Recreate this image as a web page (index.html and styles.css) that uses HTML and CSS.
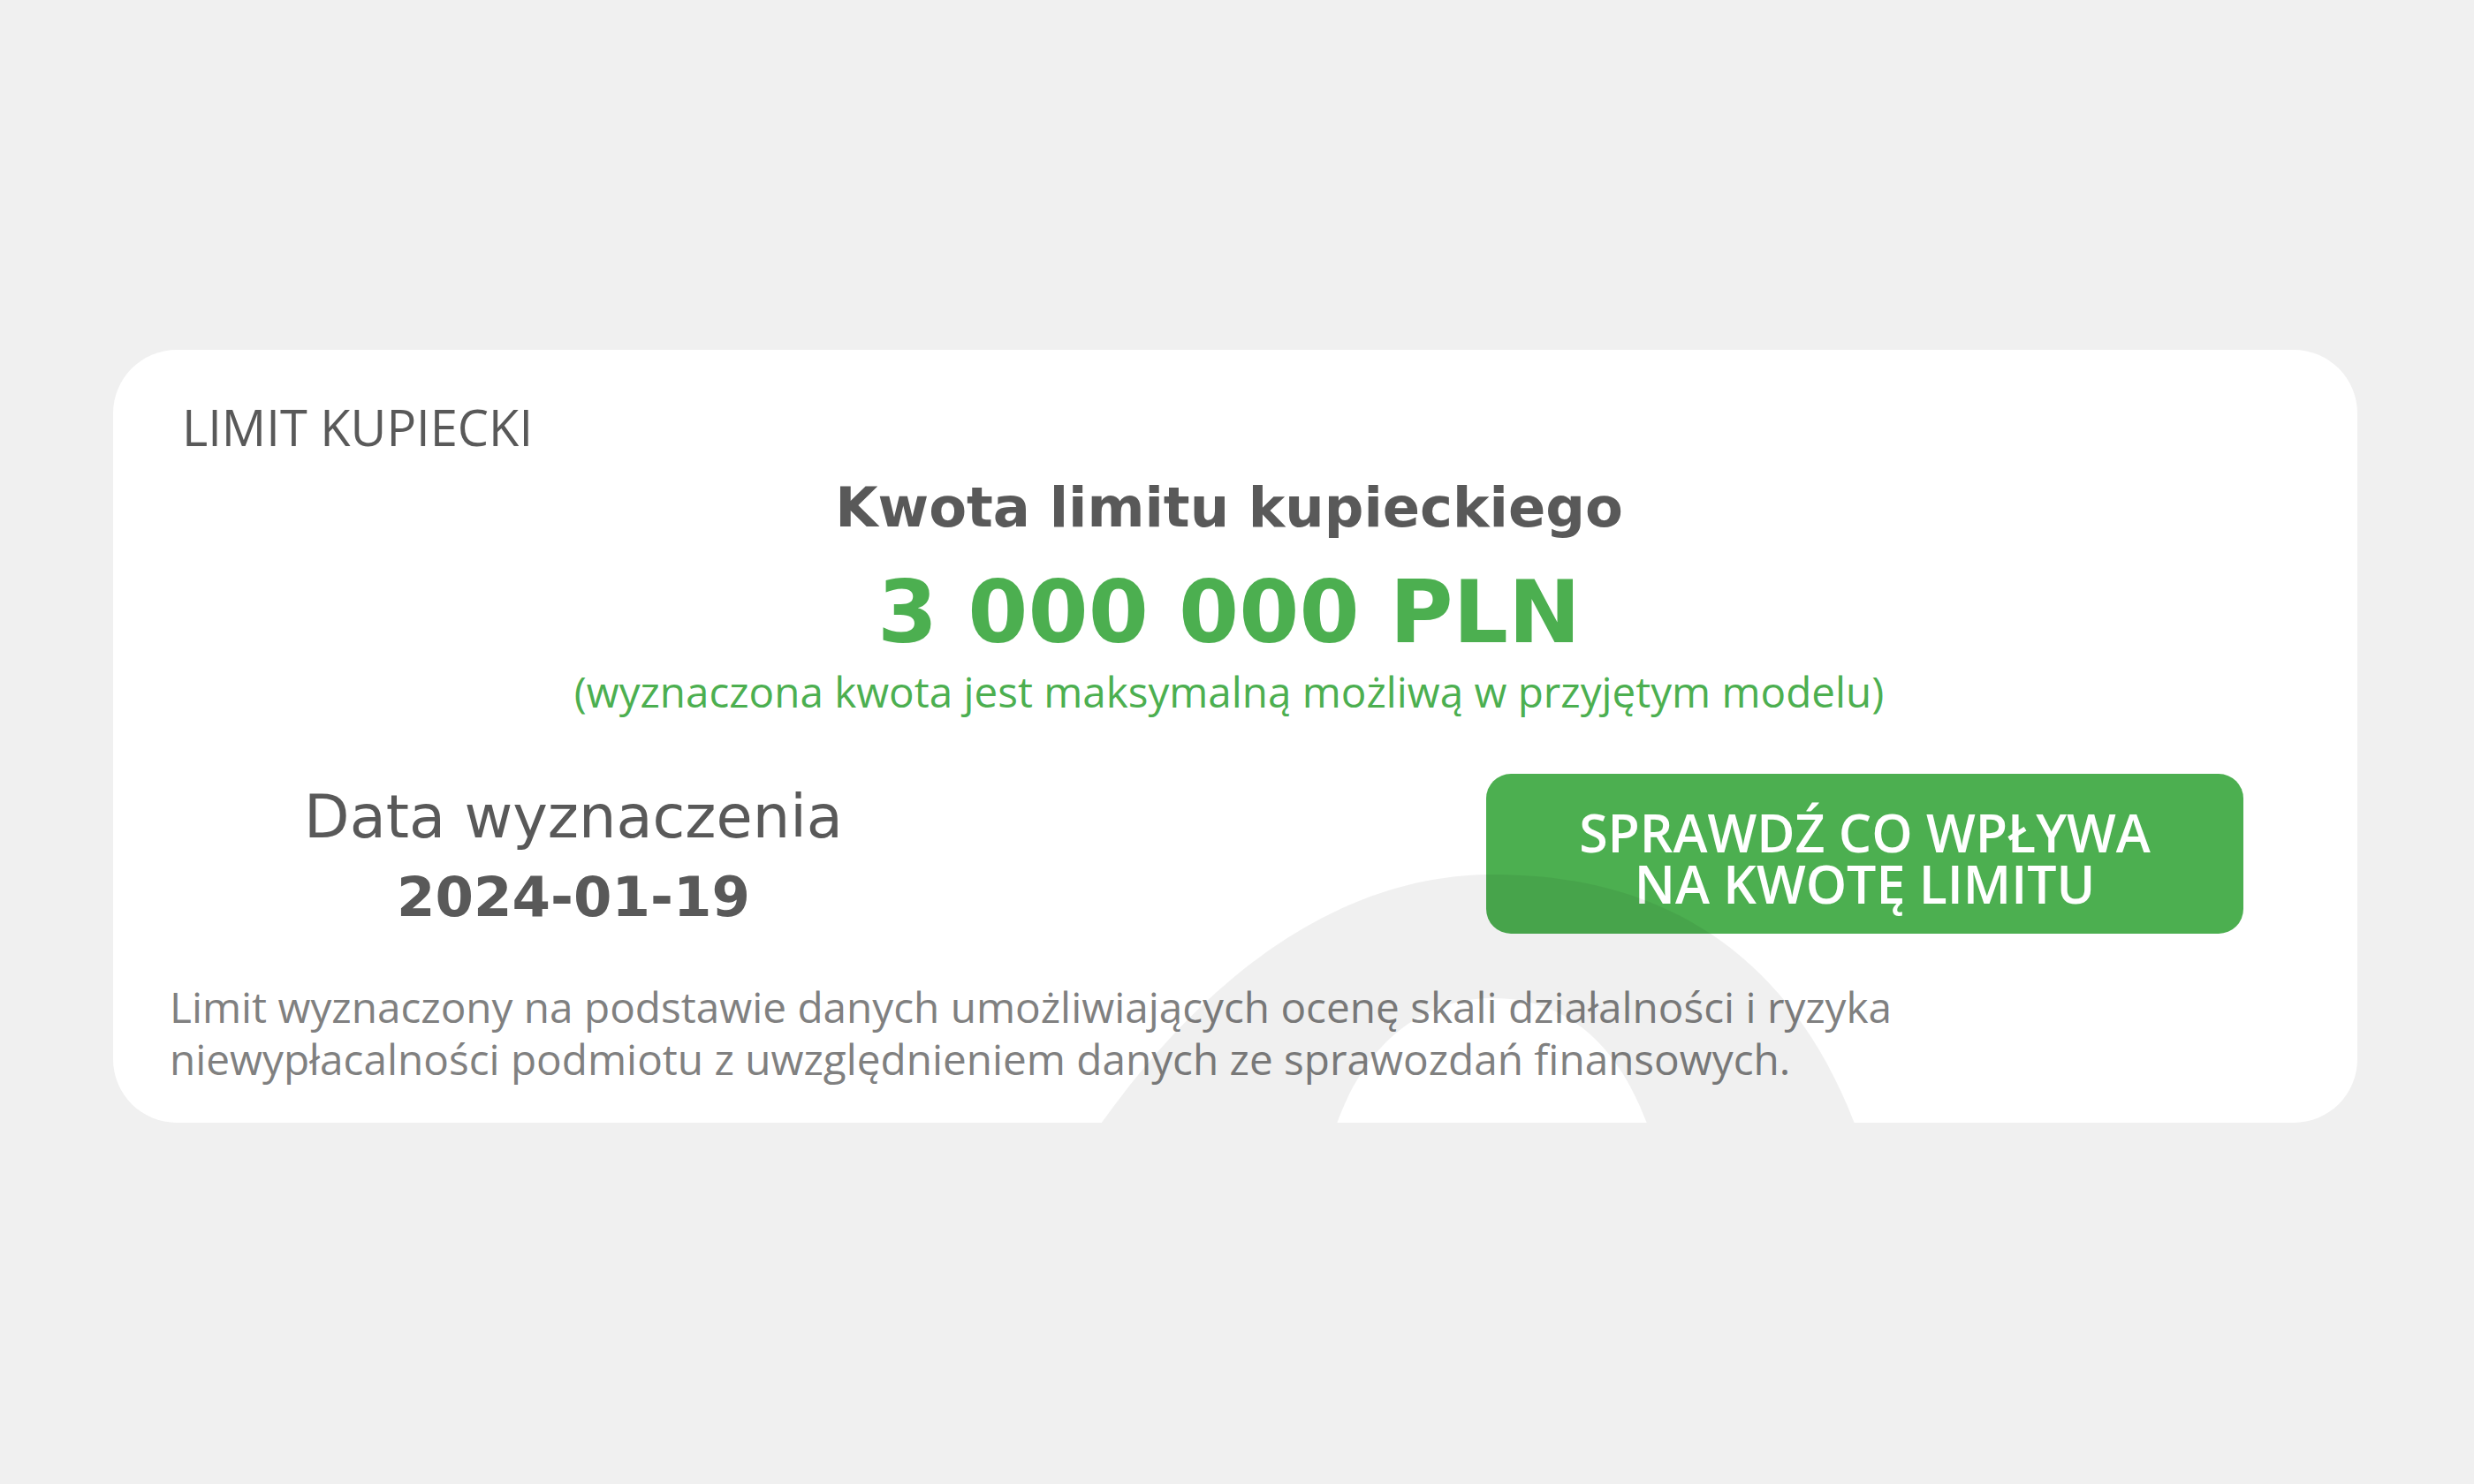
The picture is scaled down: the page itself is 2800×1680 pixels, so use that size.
FILE: index.html
```html
<!DOCTYPE html>
<html lang="pl">
<head>
  <meta charset="UTF-8" />
  <title>Limit kupiecki</title>
  <link rel="stylesheet" href="styles.css">
</head>
<body>

  <div class="page">
    <!-- Karta z limitem kupieckim -->
    <section class="card">
      <h2 class="card-title">LIMIT KUPIECKI</h2>

      <div class="limit">
        <h3 class="limit-label">Kwota limitu kupieckiego</h3>
        <div class="limit-amount">3 000 000 PLN</div>
        <p class="limit-note">(wyznaczona kwota jest maksymalną możliwą w przyjętym modelu)</p>
      </div>

      <div class="limit-row">
        <div class="limit-date">
          <div class="date-label">Data wyznaczenia</div>
          <div class="date-value">2024-01-19</div>
        </div>
        <button class="btn-check">SPRAWDŹ CO WPŁYWA<br>NA KWOTĘ LIMITU</button>
      </div>

      <p class="limit-desc">Limit wyznaczony na podstawie danych umożliwiających ocenę skali działalności i ryzyka niewypłacalności podmiotu z uwzględnieniem danych ze sprawozdań finansowych.</p>

      <!-- znak wodny w tle karty -->
      <svg class="watermark" viewBox="0 0 2540 876" aria-hidden="true">
        <path fill-rule="evenodd" d="M1118 876 C1280 650 1440 594 1562 594 C1700 594 1880 640 1971 876 L1990 920 L1100 920 Z M1385 876 C1420 780 1485 734 1562 734 C1640 734 1700 780 1736 876 L1750 920 L1370 920 Z"/>
      </svg>
    </section>
  </div>

</body>
</html>
```

FILE: styles.css
```css
body {
  margin: 0;
  background: #f0f0f0;
  font-family: "Open Sans", sans-serif;
  color: #595959;
}

.page {
  height: 1680px;
  padding: 396px 0 0 128px;
  box-sizing: border-box;
}

.card {
  position: relative;
  width: 2540px;
  box-sizing: border-box;
  padding: 54px 78px 43px 64px;
  background: white;
  border-radius: 72px;
  overflow: hidden;
}

.card-title {
  margin: 0;
  padding-left: 14px;
  font-family: "Open Sans", sans-serif;
  font-weight: normal;
  font-size: 56px;
  line-height: 66px;
  color: #595959;
}

.limit {
  text-align: center;
}

.limit-label {
  margin: 22px 0 0;
  font-family: "DejaVu Sans", sans-serif;
  font-weight: bold;
  font-size: 62.4px;
  line-height: 74px;
  color: #595959;
}

.limit-amount {
  margin-top: 23px;
  font-family: "DejaVu Sans", sans-serif;
  font-weight: bold;
  font-size: 98px;
  line-height: 116px;
  color: #4caf50;
}

.limit-note {
  margin: 4px 0 0;
  font-size: 47.6px;
  line-height: 56px;
  color: #4caf50;
}

.limit-row {
  display: flex;
  align-items: flex-start;
  margin-top: 65px;
}

.limit-date {
  width: 914px;
  margin-top: 6px;
  text-align: center;
  font-family: "DejaVu Sans", sans-serif;
  color: #595959;
}

.date-label {
  font-size: 67px;
  line-height: 86px;
}

.date-value {
  margin-top: 8px;
  font-weight: bold;
  font-size: 62.5px;
  line-height: 80px;
}

.btn-check {
  margin-left: auto;
  margin-right: 51px;
  width: 857px;
  padding: 37px 0 28px;
  border: none;
  border-radius: 28px;
  background-color: #4caf50;
  color: white;
  font-family: "Open Sans", sans-serif;
  font-weight: 600;
  font-size: 59px;
  line-height: 58px;
  text-align: center;
  cursor: pointer;
}

.limit-desc {
  max-width: 2200px;
  margin: 53px 0 0;
  font-size: 47.7px;
  line-height: 59px;
  color: #808080;
}

.watermark {
  position: absolute;
  left: 0;
  top: 0;
  width: 2540px;
  height: 876px;
  fill: rgba(0, 0, 0, 0.06);
  pointer-events: none;
}
```
